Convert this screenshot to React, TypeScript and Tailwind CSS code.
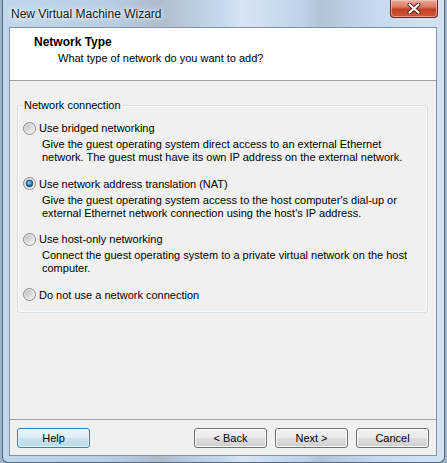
import React from 'react';

interface RadioProps {
  checked?: boolean;
}

const Radio: React.FC<RadioProps> = ({ checked }) => (
  <svg width="13" height="13" viewBox="0 0 13 13" className="shrink-0">
    <defs>
      <linearGradient id="rOuter" x1="0" y1="0" x2="1" y2="1">
        <stop offset="0" stopColor="#d6d6d6" />
        <stop offset="1" stopColor="#fbfbfb" />
      </linearGradient>
      <linearGradient id="rInner" x1="0" y1="0" x2="1" y2="1">
        <stop offset="0" stopColor="#bcbcbc" />
        <stop offset="1" stopColor="#f4f4f4" />
      </linearGradient>
      <radialGradient id="rDot" cx="0.45" cy="0.4" r="0.6">
        <stop offset="0" stopColor="#8fd3fb" />
        <stop offset="0.55" stopColor="#2f86cc" />
        <stop offset="1" stopColor="#0f3d6e" />
      </radialGradient>
    </defs>
    <circle cx="6.5" cy="6.5" r="6" fill="url(#rOuter)" stroke="#8a8a8a" strokeWidth="1" />
    <circle cx="6.5" cy="6.5" r="4.2" fill="url(#rInner)" />
    {checked && <circle cx="6.5" cy="6.5" r="3.4" fill="url(#rDot)" stroke="#1a4468" strokeWidth="0.6" />}
  </svg>
);

interface OptionProps {
  label: string;
  checked?: boolean;
  children?: React.ReactNode;
}

const Option: React.FC<OptionProps> = ({ label, checked, children }) => (
  <div>
    <div className="flex items-center gap-[3px] h-[14px]">
      <Radio checked={checked} />
      <span className="leading-[14px]">{label}</span>
    </div>
    {children && <p className="mt-[3px] pl-[19px] leading-[13px]">{children}</p>}
  </div>
);

interface WinButtonProps {
  label: string;
  focused?: boolean;
}

const WinButton: React.FC<WinButtonProps> = ({ label, focused }) => (
  <button
    className={
      focused
        ? 'w-[73px] h-[20px] rounded-[3px] border border-[#3c7fb1] shadow-[inset_0_0_0_1px_#e8f4fb] bg-[linear-gradient(to_bottom,#eaf5fb_0%,#dcedf7_50%,#c9e3f2_50%,#bcd9ec_100%)] text-[11px] leading-[18px] text-black'
        : 'w-[73px] h-[20px] rounded-[3px] border border-[#707070] shadow-[inset_0_0_0_1px_#fbfbfb] bg-[linear-gradient(to_bottom,#f2f2f2_0%,#ebebeb_50%,#dddddd_50%,#cfcfcf_100%)] text-[11px] leading-[18px] text-black'
    }
  >
    {label}
  </button>
);

export default function App() {
  return (
    <div className="w-[447px] h-[463px] overflow-hidden bg-[#9fb4c9] font-['Liberation_Sans',Arial,sans-serif] text-[11px] text-black">
      {/* Window frame */}
      <div className="relative ml-[2px] w-[443px] h-[463px] flex flex-col border-x border-b border-[#55687c] rounded-b-[6px] bg-[linear-gradient(to_right,#c3d7ec_0%,#b9cde2_25%,#aebdcc_35%,#c6d9ec_50%,#d7e6f4_54%,#bfd2e6_68%,#b3c4d6_72%,#c7daee_85%,#d3e3f2_100%)]">
        {/* Title bar */}
        <div className="h-[27px] shrink-0 flex items-center pl-[8px]">
          <span className="text-[12px] text-[#101820] [text-shadow:0_0_6px_#ffffff,0_0_3px_#ffffff]">New Virtual Machine Wizard</span>
        </div>

        {/* Close button */}
        <div className="absolute top-0 right-[6px] w-[48px] h-[18px] flex items-center justify-center rounded-b-[4px] border border-t-0 border-[#6a2a20] bg-[linear-gradient(to_bottom,#e9a99b_0%,#dc7b66_40%,#c53f22_55%,#cf5a3c_100%)] shadow-[inset_0_0_0_1px_rgba(255,220,210,0.5)]">
          <svg width="14" height="11" viewBox="0 0 14 11">
            <path d="M2.5 1.5 L11.5 9.5 M11.5 1.5 L2.5 9.5" stroke="#4a1d16" strokeWidth="4" strokeLinecap="round" />
            <path d="M2.5 1.5 L11.5 9.5 M11.5 1.5 L2.5 9.5" stroke="#ffffff" strokeWidth="2.2" strokeLinecap="round" />
          </svg>
        </div>

        {/* Client area */}
        <div className="ml-[6px] w-[428px] h-[429px] shrink-0 flex flex-col border border-[#7f93a8] bg-[#f0f0f0]">
          {/* Header */}
          <div className="h-[52px] shrink-0 bg-white pt-[7px]">
            <div className="pl-[24px] text-[12px] font-bold leading-[14px]">Network Type</div>
            <div className="mt-[3px] pl-[48px] leading-[13px]">What type of network do you want to add?</div>
          </div>
          <div className="h-px shrink-0 bg-[#a0a0a0]" />

          {/* Body */}
          <div className="flex-1 pt-[24px] pl-[7px]">
            <div className="relative w-[411px] h-[208px] rounded-[3px] border border-[#d5dfe5] shadow-[inset_0_0_0_1px_#fafafa] pt-[15px] pl-[5px] flex flex-col gap-[12.5px]">
              <span className="absolute left-[5px] top-[-7.5px] px-[1px] leading-[13px] bg-[#f0f0f0]">Network connection</span>
              <Option label="Use bridged networking">
                Give the guest operating system direct access to an external Ethernet
                <br />
                network. The guest must have its own IP address on the external network.
              </Option>
              <Option label="Use network address translation (NAT)" checked>
                Give the guest operating system access to the host computer's dial-up or
                <br />
                external Ethernet network connection using the host's IP address.
              </Option>
              <Option label="Use host-only networking">
                Connect the guest operating system to a private virtual network on the host
                <br />
                computer.
              </Option>
              <Option label="Do not use a network connection" />
            </div>
          </div>

          <div className="h-px shrink-0 bg-[#a0a0a0]" />
          {/* Footer */}
          <div className="h-[35px] shrink-0 flex items-start justify-between px-[7px] pt-[8px]">
            <WinButton label="Help" focused />
            <div className="flex gap-[8px]">
              <WinButton label="< Back" />
              <WinButton label="Next >" />
              <WinButton label="Cancel" />
            </div>
          </div>
        </div>
      </div>
    </div>
  );
}
